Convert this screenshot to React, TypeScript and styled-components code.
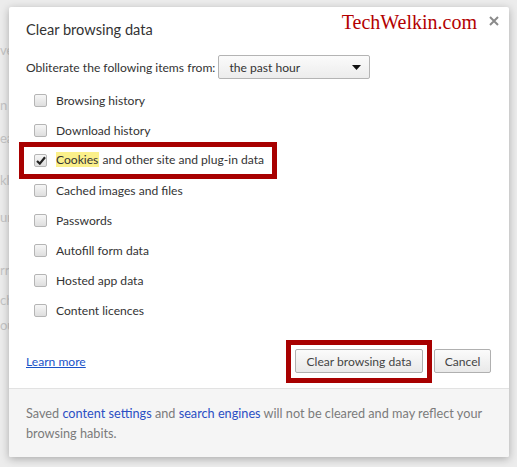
import styled, { createGlobalStyle } from 'styled-components';

const GlobalStyle = createGlobalStyle`
  html, body {
    margin: 0;
    padding: 0;
  }
  body {
    background: #ececec;
    font-family: Lato, "Noto Sans", sans-serif;
    color: #333;
  }
`;

const Page = styled.div`
  position: relative;
  width: 517px;
  height: 467px;
  overflow: hidden;
  background: #ececec;
`;

const Backdrop = styled.div`
  display: flex;
  flex-direction: column;
  padding-top: 42px;
  font-size: 13px;
  line-height: 16px;
  color: #c4c4c4;
`;

const BgLine = styled.div<{ $gap: number }>`
  margin-top: ${({ $gap }) => $gap}px;
  white-space: nowrap;
`;

const Dialog = styled.section`
  position: absolute;
  left: 9px;
  top: 7px;
  width: 500px;
  background: #fff;
  border-radius: 2px;
  box-shadow: 0 2px 9px rgba(0, 0, 0, 0.28);
  overflow: hidden;
`;

const Header = styled.header`
  display: flex;
  height: 44px;
  padding: 0 10px 0 17px;
`;

const Title = styled.h1`
  align-self: center;
  margin: 0;
  font-size: 14.6px;
  font-weight: 400;
  color: #333;
`;

const Brand = styled.div`
  margin: 5px 0 0 auto;
  font-family: "Liberation Serif", serif;
  font-size: 20px;
  line-height: 20px;
  color: #b30000;
`;

const Close = styled.button`
  display: flex;
  margin: 9px 0 0 12px;
  padding: 0;
  border: 0;
  background: none;
  height: 10px;
`;

const FromRow = styled.div`
  display: flex;
  align-items: center;
  gap: 3px;
  height: 32px;
  padding: 0 17px;
  font-size: 12.1px;
`;

const FakeSelect = styled.div`
  display: flex;
  align-items: center;
  justify-content: space-between;
  box-sizing: border-box;
  width: 152px;
  height: 24px;
  padding: 0 8px 0 10px;
  border: 1px solid #b4b4b4;
  border-radius: 2px;
  background: linear-gradient(#fbfbfb, #ececec);
  color: #333;
`;

const CheckList = styled.ul`
  list-style: none;
  margin: 2px 0 0;
  padding: 0 17px;
`;

const Item = styled.li<{ $marked?: boolean }>`
  position: relative;
  display: flex;
  align-items: center;
  gap: 9px;
  height: 30px;
  padding-left: 8px;
  font-size: 12.1px;

  ${({ $marked }) =>
    $marked &&
    `
    &::after {
      content: '';
      position: absolute;
      left: -7px;
      top: -3px;
      width: 258px;
      bottom: -4px;
      box-sizing: border-box;
      border: 5px solid #a80000;
    }
  `}
`;

const Box = styled.span`
  display: flex;
  align-items: center;
  justify-content: center;
  box-sizing: border-box;
  width: 13px;
  height: 13px;
  border: 1px solid #b5b5b5;
  border-radius: 2px;
  background: linear-gradient(#f6f6f6, #dedede);
`;

const Mark = styled.mark`
  background: #fbf08a;
  color: inherit;
  padding: 0 1px 0 0;
  line-height: 16px;
`;

const Actions = styled.div`
  display: flex;
  align-items: center;
  height: 36px;
  margin-top: 18px;
  padding: 0 18px 0 17px;
  font-size: 12.1px;
`;

const LearnMore = styled.a`
  color: #1a53c8;
  text-decoration: underline;
  margin-right: auto;
`;

const Ring = styled.span`
  position: relative;
  display: flex;
  margin-right: 11px;

  &::after {
    content: '';
    position: absolute;
    left: -9px;
    right: -9px;
    top: -9px;
    bottom: -10px;
    border: 5px solid #a80000;
  }
`;

const Button = styled.button<{ $width: number }>`
  width: ${({ $width }) => $width}px;
  height: 24px;
  padding: 0;
  border: 1px solid #b0b0b0;
  border-radius: 2px;
  background: linear-gradient(#fbfbfb, #e9e9e9);
  font-family: inherit;
  font-size: 12.1px;
  color: #444;
`;

const Footer = styled.footer`
  margin-top: 9px;
  padding: 14px 17px;
  border-top: 1px solid #e2e2e2;
  background: #f5f5f5;
  font-size: 12.7px;
  line-height: 20px;
  color: #7b7b7b;
  white-space: nowrap;
`;

const Link = styled.a`
  color: #2b4fc4;
`;

const bgLines = [
  { text: 've', gap: 0 },
  { text: 'n', gap: 39 },
  { text: 'ea', gap: 17 },
  { text: 'kl', gap: 26 },
  { text: 'ur', gap: 21 },
  { text: 'rr', gap: 37 },
  { text: 'ch', gap: 14 },
  { text: 'ou', gap: 9 },
];

const items = [
  'Browsing history',
  'Download history',
  'Cookies',
  'Cached images and files',
  'Passwords',
  'Autofill form data',
  'Hosted app data',
  'Content licences',
];

export default function App() {
  return (
    <Page>
      <GlobalStyle />
      <Backdrop>
        {bgLines.map((l) => (
          <BgLine key={l.text} $gap={l.gap}>
            {l.text}
          </BgLine>
        ))}
      </Backdrop>
      <Dialog>
        <Header>
          <Title>Clear browsing data</Title>
          <Brand>TechWelkin.com</Brand>
          <Close aria-label="Close">
            <svg width="10" height="10" viewBox="0 0 10 10">
              <path d="M1 1 L9 9 M9 1 L1 9" stroke="#8a8a8a" strokeWidth="2" />
            </svg>
          </Close>
        </Header>
        <FromRow>
          Obliterate the following items from:
          <FakeSelect>
            the past hour
            <svg width="9" height="5" viewBox="0 0 9 5">
              <path d="M0 0 H9 L4.5 5 Z" fill="#111" />
            </svg>
          </FakeSelect>
        </FromRow>
        <CheckList>
          {items.map((name) =>
            name === 'Cookies' ? (
              <Item key={name} $marked>
                <Box>
                  <svg width="10" height="9" viewBox="0 0 10 9">
                    <path d="M1 5 L3.8 7.6 L9 1.2" stroke="#222" strokeWidth="2.2" fill="none" />
                  </svg>
                </Box>
                <span>
                  <Mark>Cookies</Mark> and other site and plug-in data
                </span>
              </Item>
            ) : (
              <Item key={name}>
                <Box />
                <span>{name}</span>
              </Item>
            ),
          )}
        </CheckList>
        <Actions>
          <LearnMore href="#">Learn more</LearnMore>
          <Ring>
            <Button $width={128}>Clear browsing data</Button>
          </Ring>
          <Button $width={57}>Cancel</Button>
        </Actions>
        <Footer>
          Saved <Link>content settings</Link> and <Link>search engines</Link> will not be cleared and may reflect your
          <br />
          browsing habits.
        </Footer>
      </Dialog>
    </Page>
  );
}
